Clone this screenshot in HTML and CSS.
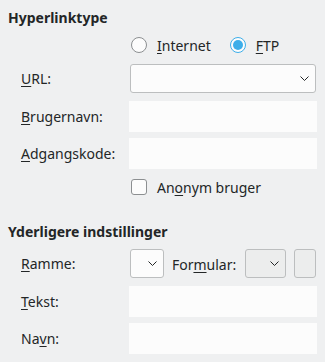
FILE: index.html
```html
<!DOCTYPE html>
<html lang="da">
  <head>
    <meta charset="UTF-8" />
    <meta name="viewport" content="width=device-width, initial-scale=1.0" />
    <title>Hyperlink</title>
    <link rel="stylesheet" href="styles.css">
  </head>
  <body>
    <section class="group">
      <h2 class="group-title">Hyperlinktype</h2>
      <div class="form">
        <div class="row short">
          <span></span>
          <div class="options">
            <label class="option">
              <span class="radio"></span>
              <span><u>I</u>nternet</span>
            </label>
            <label class="option">
              <span class="radio checked"></span>
              <span><u>F</u>TP</span>
            </label>
          </div>
        </div>
        <div class="row combo-row">
          <span class="label"><u>U</u>RL:</span>
          <div class="combo wide">
            <svg class="chevron" width="9" height="5" viewBox="0 0 9 5"><path d="M0.5 0.5 L4.5 4.5 L8.5 0.5" fill="none" stroke="#232627" stroke-width="1"/></svg>
          </div>
        </div>
        <div class="row">
          <span class="label"><u>B</u>rugernavn:</span>
          <input class="field" type="text" />
        </div>
        <div class="row">
          <span class="label"><u>A</u>dgangskode:</span>
          <input class="field" type="password" />
        </div>
        <div class="row short">
          <span></span>
          <label class="option">
            <span class="checkbox"></span>
            <span>An<u>o</u>nym bruger</span>
          </label>
        </div>
      </div>
    </section>

    <section class="group second">
      <h2 class="group-title">Yderligere indstillinger</h2>
      <div class="form">
        <div class="row combo-row">
          <span class="label"><u>R</u>amme:</span>
          <div class="inline">
            <div class="combo small">
              <svg class="chevron" width="9" height="5" viewBox="0 0 9 5"><path d="M0.5 0.5 L4.5 4.5 L8.5 0.5" fill="none" stroke="#232627" stroke-width="1"/></svg>
            </div>
            <span class="inline-label">For<u>m</u>ular:</span>
            <div class="combo medium flat">
              <svg class="chevron" width="9" height="5" viewBox="0 0 9 5"><path d="M0.5 0.5 L4.5 4.5 L8.5 0.5" fill="none" stroke="#232627" stroke-width="1"/></svg>
            </div>
            <div class="button"></div>
          </div>
        </div>
        <div class="row">
          <span class="label"><u>T</u>ekst:</span>
          <input class="field" type="text" />
        </div>
        <div class="row">
          <span class="label">Na<u>v</u>n:</span>
          <input class="field" type="text" />
        </div>
      </div>
    </section>
  </body>
</html>
```

FILE: styles.css
```css
body {
  margin: 0;
  padding: 8px 8px 0 8px;
  background-color: #eff0f1;
  color: #232627;
  font-family: "Noto Sans", sans-serif;
  font-size: 14px;
}

u {
  text-decoration-thickness: 1px;
  text-underline-offset: 2px;
}

.group-title {
  margin: 0;
  font-size: 14px;
  font-weight: bold;
  line-height: 20px;
}

.second {
  margin-top: 23px;
}

.form {
  display: flex;
  flex-direction: column;
  gap: 6px;
  margin-top: 5px;
  padding-left: 13px;
}

.second .form {
  margin-top: 6px;
}

.row {
  display: grid;
  grid-template-columns: 108px 188px;
  align-items: center;
  height: 31px;
}

.row.short {
  height: 24px;
}

.row.combo-row {
  height: 32px;
}

.label {
  line-height: 20px;
}

.options {
  display: flex;
  gap: 17px;
}

.option {
  display: flex;
  align-items: center;
  gap: 10px;
  padding-left: 2px;
}

.radio {
  width: 16px;
  height: 16px;
  box-sizing: border-box;
  border: 1px solid #8c8f91;
  border-radius: 50%;
  background-color: #fcfcfc;
  position: relative;
}

.radio.checked {
  border-color: #3daee9;
}

.radio.checked::after {
  content: "";
  position: absolute;
  left: 2px;
  top: 2px;
  width: 10px;
  height: 10px;
  border-radius: 50%;
  background-color: #3daee9;
}

.checkbox {
  width: 16px;
  height: 16px;
  box-sizing: border-box;
  border: 1px solid #8c8f91;
  border-radius: 3px;
  background-color: #fcfcfc;
}

.field {
  box-sizing: border-box;
  width: 188px;
  height: 31px;
  margin: 0;
  border: none;
  background-color: #fcfcfc;
  font: inherit;
}

.combo {
  box-sizing: border-box;
  height: 29px;
  margin: 1px 1px 2px 1px;
  border: 1px solid #bcbebf;
  border-radius: 3px;
  background-color: #fcfcfc;
  display: flex;
  align-items: center;
  justify-content: flex-end;
  padding-right: 6px;
}

.combo.wide {
  width: 186px;
}

.combo.small {
  width: 34px;
}

.combo.medium {
  width: 41px;
}

.combo.flat,
.button {
  background-color: #eceded;
}

.inline {
  display: flex;
  align-items: center;
}

.inline-label {
  margin-left: 7px;
  margin-right: 8px;
}

.button {
  box-sizing: border-box;
  width: 22px;
  height: 29px;
  margin: 1px 1px 2px 7px;
  border: 1px solid #bcbebf;
  border-radius: 3px;
}
```
